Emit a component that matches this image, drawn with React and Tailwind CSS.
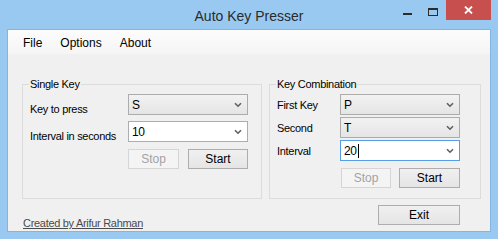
import React from "react";

const FONT = { fontFamily: '"Liberation Sans", Arial, sans-serif' };

function Chevron() {
  return (
    <svg width="8" height="6" viewBox="0 0 8 6" className="shrink-0">
      <path d="M1 1.2 L4 4.2 L7 1.2" fill="none" stroke="#5f5f5f" strokeWidth="1.6" />
    </svg>
  );
}

// list = DropDownList style (grey), otherwise editable (white)
function Combo({ value, list, focused, caret }) {
  const look = list
    ? "bg-gradient-to-b from-[#f2f2f2] to-[#e5e5e5] border-[#acacac]"
    : focused
    ? "bg-white border-[#569de5]"
    : "bg-white border-[#abadb3]";
  return (
    <div className={`w-[120px] h-[21px] border ${look} flex items-center justify-between pl-[3px] pr-[5px]`}>
      <span className="text-[12px] leading-[14px] text-black flex items-center">
        {value}
        {caret && <span className="inline-block w-px h-[14px] bg-black ml-[1px]" />}
      </span>
      <Chevron />
    </div>
  );
}

function Button({ children, disabled, className = "" }) {
  return (
    <button
      type="button"
      className={`h-[20px] text-[12px] leading-[14px] border ${
        disabled
          ? "bg-[#f4f4f4] border-[#d5d5d5] text-[#a3a3a3]"
          : "bg-gradient-to-b from-[#f0f0f0] to-[#e5e5e5] border-[#adadad] text-black"
      } ${className}`}
    >
      {children}
    </button>
  );
}

export default function App() {
  return (
    <div style={FONT} className="w-[498px] h-[239px] bg-[#99c9f1] flex flex-col overflow-hidden">
      {/* title bar */}
      <div className="relative h-[29px] shrink-0">
        <div className="text-center text-[14px] leading-[29px] pt-[2px] text-[#2b2b2b]">Auto Key Presser</div>
        <div className="absolute top-0 right-[7px] flex items-start">
          <div className="w-[26px] h-[20px] flex items-center justify-center">
            <div className="w-[9px] h-[2px] bg-[#2b2b2b] mt-[7px]" />
          </div>
          <div className="w-[26px] h-[20px] flex items-center justify-center">
            <div className="w-[10px] h-[8px] border border-[#2b2b2b] border-t-2 mt-[3px]" />
          </div>
          <div className="w-[45px] h-[20px] bg-[#c7504f] flex items-center justify-center">
            <svg width="9" height="8" viewBox="0 0 9 8">
              <path d="M1 0.5 L8 7.5 M8 0.5 L1 7.5" stroke="white" strokeWidth="1.8" />
            </svg>
          </div>
        </div>
      </div>

      {/* client */}
      <div className="mx-[7px] h-[203px] border border-[#83b4e2] bg-[#f0f0f0] flex flex-col">
        <div className="h-[24px] bg-gradient-to-b from-[#fcfcfc] to-[#f5f5f5] flex items-center gap-[18px] pl-[15px] pt-[2px] text-[12px] text-black">
          <span>File</span>
          <span>Options</span>
          <span>About</span>
        </div>

        <div className="flex flex-col pl-[14px] pr-[9px] text-[11px] tracking-[-0.3px] text-black">
          <div className="flex gap-[7px] mt-[22px]">
            <fieldset className="w-[240px] h-[123px] border border-[#dcdcdc]">
              <legend className="ml-[6px] px-[1px] leading-[16px]">Single Key</legend>
              <div className="pt-[2px] pl-[7px]">
                <div className="flex items-start h-[21px]">
                  <span className="w-[98px] mt-[7px] leading-[16px]">Key to press</span>
                  <Combo value="S" list />
                </div>
                <div className="flex items-start h-[21px] mt-[6px]">
                  <span className="w-[98px] mt-[7px] leading-[16px]">Interval in seconds</span>
                  <Combo value="10" />
                </div>
                <div className="flex gap-[9px] mt-[7px] ml-[98px] tracking-normal">
                  <Button disabled className="w-[51px]">Stop</Button>
                  <Button className="w-[60px]">Start</Button>
                </div>
              </div>
            </fieldset>

            <fieldset className="w-[212px] h-[123px] border border-[#dcdcdc]">
              <legend className="ml-[6px] px-[1px] leading-[16px]">Key Combination</legend>
              <div className="pt-[2px] pl-[7px]">
                <div className="flex items-center h-[21px]">
                  <span className="w-[63px] leading-[16px]">First Key</span>
                  <Combo value="P" list />
                </div>
                <div className="flex items-center h-[21px] mt-[2px]">
                  <span className="w-[63px] leading-[16px]">Second</span>
                  <Combo value="T" list />
                </div>
                <div className="flex items-center h-[21px] mt-[2px]">
                  <span className="w-[63px] leading-[16px]">Interval</span>
                  <Combo value="20" focused caret />
                </div>
                <div className="flex gap-[8px] mt-[7px] ml-[64px] tracking-normal">
                  <Button disabled className="w-[50px]">Stop</Button>
                  <Button className="w-[61px]">Start</Button>
                </div>
              </div>
            </fieldset>
          </div>

          <div className="flex items-start mt-[6px]">
            <span className="mt-[10px] ml-[1px] leading-[16px] underline text-[#4a4a4a]">Created by Arifur Rahman</span>
            <Button className="w-[82px] ml-auto mr-[21px] tracking-normal">Exit</Button>
          </div>
        </div>
      </div>
    </div>
  );
}
